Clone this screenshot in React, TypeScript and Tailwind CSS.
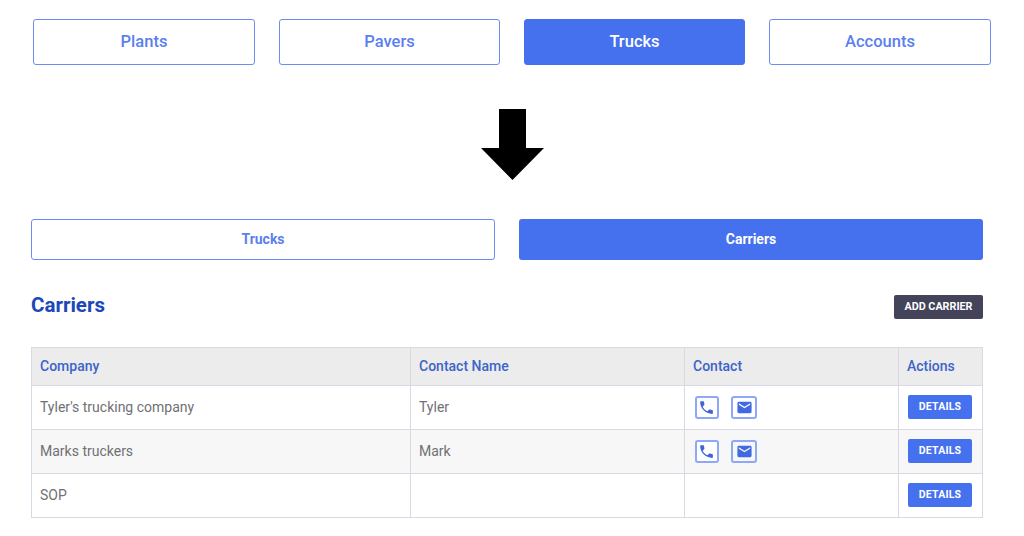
import { MdEmail, MdPhone } from "react-icons/md";

const navItems = ["Plants", "Pavers", "Trucks", "Accounts"];

const carriers = [
  { company: "Tyler's trucking company", contact: "Tyler", hasContact: true },
  { company: "Marks truckers", contact: "Mark", hasContact: true },
  { company: "SOP", contact: "", hasContact: false },
];

function ContactIcons() {
  return (
    <div className="ml-[2px] flex items-center gap-[12px]">
      <span className="flex h-[23px] w-[24px] items-center justify-center rounded-[3px] border-2 border-[#8ea8f7] bg-white pr-[1px] text-[#3f66d8]">
        <MdPhone className="h-[17px] w-[17px]" />
      </span>
      <span className="flex h-[23px] w-[26px] items-center justify-center rounded-[3px] border-2 border-[#8ea8f7] text-[#4169e1]">
        <MdEmail className="h-[17px] w-[17px]" />
      </span>
    </div>
  );
}

export default function App() {
  return (
    <div className="h-[536px] w-[1024px] overflow-hidden bg-white font-['Roboto',sans-serif]">
      {/* Top nav */}
      <div className="ml-[33px] grid grid-cols-[222px_221px_221px_222px] gap-[24px] pt-[19px]">
        {navItems.map((item) => (
          <div
            key={item}
            className={
              item === "Trucks"
                ? "flex h-[46px] items-center justify-center rounded-[3px] border border-[#4570ee] bg-[#4570ee] pt-[1px] text-[16.5px] font-medium text-white"
                : "flex h-[46px] items-center justify-center rounded-[3px] border border-[#6d8cf2] bg-white pt-[1px] text-[16.5px] font-medium text-[#5b7ff0]"
            }
          >
            {item}
          </div>
        ))}
      </div>

      {/* Arrow */}
      <div className="flex justify-center pt-[44px]">
        <svg width="64" height="71" viewBox="0 0 64 71" className="ml-[1px] block">
          <path d="M18 0H45V39H63L31.5 71L0 39H18Z" fill="#000" />
        </svg>
      </div>

      <div className="ml-[31px] w-[952px]">
        {/* Tabs */}
        <div className="mt-[39px] flex gap-[24px]">
          <div className="flex h-[41px] w-[464px] items-center justify-center rounded-[3px] border border-[#6d8cf2] bg-white text-[14px] font-bold text-[#5b7ff0]">
            Trucks
          </div>
          <div className="flex h-[41px] w-[464px] items-center justify-center rounded-[3px] bg-[#4570ee] text-[14px] font-bold text-white">
            Carriers
          </div>
        </div>

        {/* Heading */}
        <div className="mt-[35px] flex h-[24px] items-center justify-between">
          <h2 className="-translate-y-[2px] text-[20.5px] font-bold text-[#1c48b8]">Carriers</h2>
          <button className="h-[24px] w-[89px] rounded-[2px] bg-[#43435a] text-[10.75px] font-bold text-white">
            ADD CARRIER
          </button>
        </div>

        {/* Table */}
        <table className="mt-[28px] w-[951px] table-fixed border-collapse border border-[#d9d9e6] text-[14px]">
          <colgroup>
            <col className="w-[379px]" />
            <col className="w-[274px]" />
            <col className="w-[214px]" />
            <col className="w-[84px]" />
          </colgroup>
          <thead>
            <tr className="h-[38px] bg-[#ececec] text-left font-medium text-[#3d64c8]">
              <th className="border border-[#d9d9e6] px-2 font-medium">Company</th>
              <th className="border border-[#d9d9e6] px-2 font-medium">Contact Name</th>
              <th className="border border-[#d9d9e6] px-2 font-medium">Contact</th>
              <th className="border border-[#d9d9e6] px-2 font-medium">Actions</th>
            </tr>
          </thead>
          <tbody className="text-[#707074]">
            {carriers.map((row, index) => (
              <tr key={row.company} className={index === 1 ? "h-[44px] bg-[#f7f7f7]" : "h-[44px] bg-white"}>
                <td className="border border-[#d9d9e6] px-2">{row.company}</td>
                <td className="border border-[#d9d9e6] px-2">{row.contact}</td>
                <td className="border border-[#d9d9e6] px-2">{row.hasContact && <ContactIcons />}</td>
                <td className="border border-[#d9d9e6] px-2">
                  <button className="mb-[2px] ml-[1px] block h-[24px] w-[64px] rounded-[2px] bg-[#4570ee] text-[10.5px] font-bold tracking-[0.2px] text-white">
                    DETAILS
                  </button>
                </td>
              </tr>
            ))}
          </tbody>
        </table>
      </div>
    </div>
  );
}
